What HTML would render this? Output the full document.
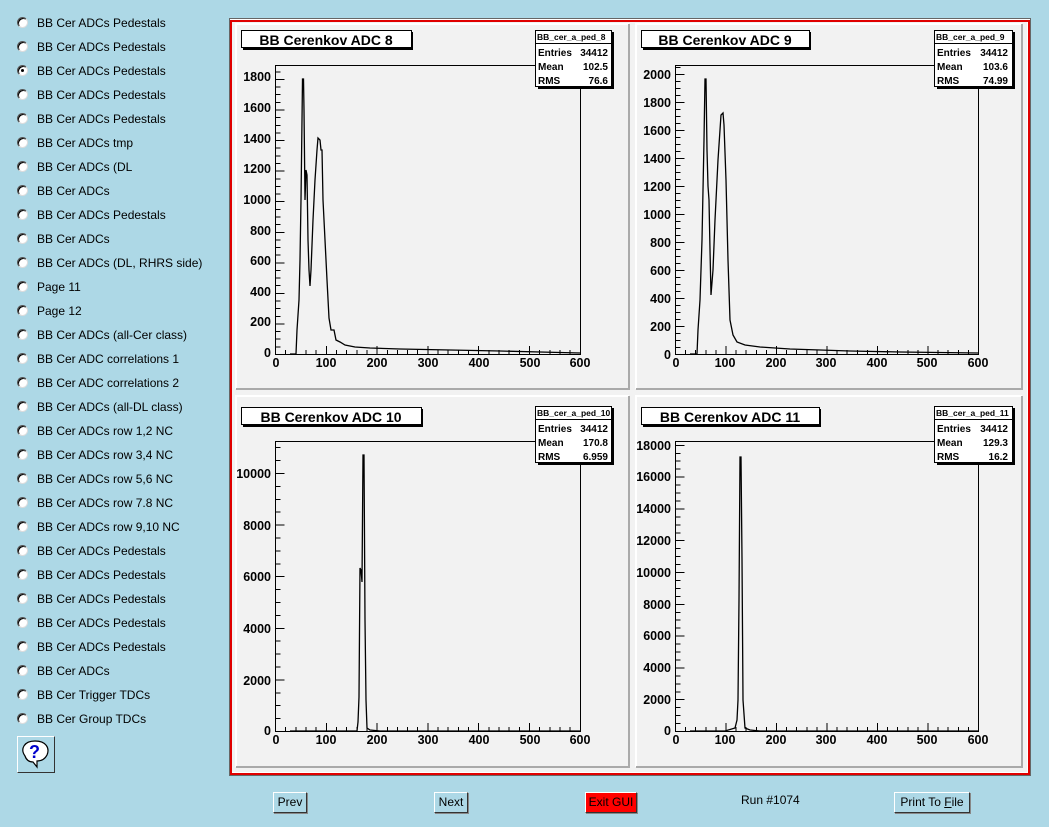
<!DOCTYPE html>
<html><head><meta charset="utf-8"><style>
body{margin:0;width:1049px;height:827px;background:#add8e6;position:relative;overflow:hidden;font-family:"Liberation Sans",sans-serif}
.it{position:absolute;left:37px;font-size:12px;color:#000;line-height:14px}
.rd{position:absolute;left:17px;width:9px;height:9px;border-radius:50%;background:#fff;border:1px solid #555;border-right-color:#ddd;border-bottom-color:#ddd;box-shadow:inset 1px 1px 0 #000}
.rd.on::after{content:"";position:absolute;left:3px;top:3px;width:3px;height:3px;background:#000;border-radius:50%}
.btn{position:absolute;height:19px;border:1px solid #fff;border-right-color:#333;border-bottom-color:#333;box-shadow:1px 1px 0 #888;font-size:12px;line-height:19px;text-align:center;background:#add8e6}
</style></head><body>
<div class="rd" style="top:17px"></div><div class="it" style="top:16px">BB Cer ADCs Pedestals</div>
<div class="rd" style="top:41px"></div><div class="it" style="top:40px">BB Cer ADCs Pedestals</div>
<div class="rd on" style="top:65px"></div><div class="it" style="top:64px">BB Cer ADCs Pedestals</div>
<div class="rd" style="top:89px"></div><div class="it" style="top:88px">BB Cer ADCs Pedestals</div>
<div class="rd" style="top:113px"></div><div class="it" style="top:112px">BB Cer ADCs Pedestals</div>
<div class="rd" style="top:137px"></div><div class="it" style="top:136px">BB Cer ADCs tmp</div>
<div class="rd" style="top:161px"></div><div class="it" style="top:160px">BB Cer ADCs (DL</div>
<div class="rd" style="top:185px"></div><div class="it" style="top:184px">BB Cer ADCs</div>
<div class="rd" style="top:209px"></div><div class="it" style="top:208px">BB Cer ADCs Pedestals</div>
<div class="rd" style="top:233px"></div><div class="it" style="top:232px">BB Cer ADCs</div>
<div class="rd" style="top:257px"></div><div class="it" style="top:256px">BB Cer ADCs (DL, RHRS side)</div>
<div class="rd" style="top:281px"></div><div class="it" style="top:280px">Page 11</div>
<div class="rd" style="top:305px"></div><div class="it" style="top:304px">Page 12</div>
<div class="rd" style="top:329px"></div><div class="it" style="top:328px">BB Cer ADCs (all-Cer class)</div>
<div class="rd" style="top:353px"></div><div class="it" style="top:352px">BB Cer ADC correlations 1</div>
<div class="rd" style="top:377px"></div><div class="it" style="top:376px">BB Cer ADC correlations 2</div>
<div class="rd" style="top:401px"></div><div class="it" style="top:400px">BB Cer ADCs (all-DL class)</div>
<div class="rd" style="top:425px"></div><div class="it" style="top:424px">BB Cer ADCs row 1,2 NC</div>
<div class="rd" style="top:449px"></div><div class="it" style="top:448px">BB Cer ADCs row 3,4 NC</div>
<div class="rd" style="top:473px"></div><div class="it" style="top:472px">BB Cer ADCs row 5,6 NC</div>
<div class="rd" style="top:497px"></div><div class="it" style="top:496px">BB Cer ADCs row 7.8 NC</div>
<div class="rd" style="top:521px"></div><div class="it" style="top:520px">BB Cer ADCs row 9,10 NC</div>
<div class="rd" style="top:545px"></div><div class="it" style="top:544px">BB Cer ADCs Pedestals</div>
<div class="rd" style="top:569px"></div><div class="it" style="top:568px">BB Cer ADCs Pedestals</div>
<div class="rd" style="top:593px"></div><div class="it" style="top:592px">BB Cer ADCs Pedestals</div>
<div class="rd" style="top:617px"></div><div class="it" style="top:616px">BB Cer ADCs Pedestals</div>
<div class="rd" style="top:641px"></div><div class="it" style="top:640px">BB Cer ADCs Pedestals</div>
<div class="rd" style="top:665px"></div><div class="it" style="top:664px">BB Cer ADCs</div>
<div class="rd" style="top:689px"></div><div class="it" style="top:688px">BB Cer Trigger TDCs</div>
<div class="rd" style="top:713px"></div><div class="it" style="top:712px">BB Cer Group TDCs</div>

<div style="position:absolute;left:17px;top:736px;width:36px;height:35px;border:1px solid #fff;border-right-color:#333;border-bottom-color:#333;background:#add8e6">
<svg width="36" height="35"><path d="M7 19 C2 12 6 4 17 4 C28 4 32 11 29 18 C26 24 20 24 19 24 L19 30 L15 25 C10 25 8 22 7 19Z" fill="#fff" stroke="#000" stroke-width="1.2"/><text x="11" y="21" font-family="Liberation Sans" font-weight="bold" font-size="18" fill="#00c">?</text></svg></div>

<svg style="position:absolute;left:0;top:0" width="1049" height="827" font-family="Liberation Sans, sans-serif">
<rect x="229.5" y="18.5" width="801" height="757" fill="#fff" stroke="#666"/>
<rect x="231" y="21" width="798" height="753" fill="none" stroke="#e00000" stroke-width="2"/>
<rect x="232" y="22" width="795" height="750" fill="#f2f2f2"/>
<g>
<path d="M236 389V24H629" stroke="#fff" fill="none" stroke-width="2"/><path d="M236 389H629V24" stroke="#aaa" fill="none" stroke-width="2"/>
<path d="M636 389V24H1022" stroke="#fff" fill="none" stroke-width="2"/><path d="M636 389H1022V24" stroke="#aaa" fill="none" stroke-width="2"/>
<path d="M236 767V396H629" stroke="#fff" fill="none" stroke-width="2"/><path d="M236 767H629V396" stroke="#aaa" fill="none" stroke-width="2"/>
<path d="M636 767V396H1022" stroke="#fff" fill="none" stroke-width="2"/><path d="M636 767H1022V396" stroke="#aaa" fill="none" stroke-width="2"/>
</g>
<g fill="none" stroke="#000" shape-rendering="crispEdges">
<rect x="275.5" y="65.5" width="305" height="289"/>
<rect x="675.5" y="65.5" width="303" height="289"/>
<rect x="275.5" y="441.5" width="305" height="290"/>
<rect x="675.5" y="441.5" width="303" height="290"/>
<line x1="275" y1="352" x2="581" y2="352" stroke-width="4" stroke-dasharray="1 9.16"/>
<line x1="275" y1="350" x2="581" y2="350" stroke-width="8" stroke-dasharray="1 49.8"/>
<line x1="675" y1="352" x2="979" y2="352" stroke-width="4" stroke-dasharray="1 9.1"/>
<line x1="675" y1="350" x2="979" y2="350" stroke-width="8" stroke-dasharray="1 49.5"/>
<line x1="275" y1="729" x2="581" y2="729" stroke-width="4" stroke-dasharray="1 9.16"/>
<line x1="275" y1="727" x2="581" y2="727" stroke-width="8" stroke-dasharray="1 49.8"/>
<line x1="675" y1="729" x2="979" y2="729" stroke-width="4" stroke-dasharray="1 9.1"/>
<line x1="675" y1="727" x2="979" y2="727" stroke-width="8" stroke-dasharray="1 49.5"/>
<line x1="278" y1="355" x2="278" y2="65" stroke-width="5" stroke-dasharray="1 6.64"/>
<line x1="280" y1="355" x2="280" y2="65" stroke-width="9" stroke-dasharray="1 29.56"/>
<line x1="678" y1="355" x2="678" y2="65" stroke-width="5" stroke-dasharray="1 6"/>
<line x1="680" y1="355" x2="680" y2="65" stroke-width="9" stroke-dasharray="1 27"/>
<line x1="278" y1="732" x2="278" y2="441" stroke-width="5" stroke-dasharray="1 11.9"/>
<line x1="280" y1="732" x2="280" y2="441" stroke-width="9" stroke-dasharray="1 50.6"/>
<line x1="678" y1="732" x2="678" y2="441" stroke-width="5" stroke-dasharray="1 6.95"/>
<line x1="680" y1="732" x2="680" y2="441" stroke-width="9" stroke-dasharray="1 30.8"/>
</g>
<g fill="none" stroke="#000">
<polyline stroke-width="1.3" points="290,354 296,354 297,330 299,300 300,260 301,200 302,120 302.5,79 303.5,79 304,110 305,200 306,170 307,175 308,240 309,270 310,286 311,270 313,220 315,180 317,150 318,138 320,140 321,150 322,150 323,200 325,240 327,280 329,318 331,330 334,330 336,340 340,342 345,345 355,347 370,348 400,349 450,350 500,351 540,352 580,353"/>
<polyline stroke-width="1.3" points="690,354 697,354 698,330 700,300 702,240 704,140 705,79 706,79 707,150 708,186 709,200 710,250 711,295 713,270 715,220 718,160 721,115 723,113 724,125 726,180 728,260 730,320 733,335 737,342 745,345 760,347 790,349 850,351 900,352 978,353"/>
<polyline stroke-width="1.3" points="290,731 357,731 358,722 359,697 360,568 361,570 362,582 363,455 364,455 365,620 366,700 367,728 370,730 380,731 580,731"/>
<polyline stroke-width="1.3" points="690,731 725,731 735,728 737,720 738,700 739,600 740,457 741,457 742,559 743,700 745,728 750,730 760,731 978,731"/>
</g>
<g font-weight="bold" font-size="12.5" text-anchor="end">
<text x="271" y="81">1800</text><text x="271" y="112">1600</text><text x="271" y="143">1400</text><text x="271" y="173">1200</text><text x="271" y="204">1000</text><text x="271" y="235">800</text><text x="271" y="265">600</text><text x="271" y="296">400</text><text x="271" y="326">200</text><text x="271" y="357">0</text>
<text x="671" y="79">2000</text><text x="671" y="107">1800</text><text x="671" y="135">1600</text><text x="671" y="163">1400</text><text x="671" y="191">1200</text><text x="671" y="219">1000</text><text x="671" y="247">800</text><text x="671" y="275">600</text><text x="671" y="303">400</text><text x="671" y="331">200</text><text x="671" y="359">0</text>
<text x="271" y="478">10000</text><text x="271" y="530">8000</text><text x="271" y="581">6000</text><text x="271" y="633">4000</text><text x="271" y="685">2000</text><text x="271" y="735">0</text>
<text x="671" y="450">18000</text><text x="671" y="481">16000</text><text x="671" y="513">14000</text><text x="671" y="545">12000</text><text x="671" y="577">10000</text><text x="671" y="609">8000</text><text x="671" y="640">6000</text><text x="671" y="672">4000</text><text x="671" y="704">2000</text><text x="671" y="735">0</text>
</g>
<g font-weight="bold" font-size="12.5" text-anchor="middle">
<text x="276" y="367">0</text><text x="326" y="367">100</text><text x="377" y="367">200</text><text x="428" y="367">300</text><text x="479" y="367">400</text><text x="530" y="367">500</text><text x="580" y="367">600</text>
<text x="676" y="367">0</text><text x="725" y="367">100</text><text x="776" y="367">200</text><text x="826" y="367">300</text><text x="877" y="367">400</text><text x="927" y="367">500</text><text x="978" y="367">600</text>
<text x="276" y="744">0</text><text x="326" y="744">100</text><text x="377" y="744">200</text><text x="428" y="744">300</text><text x="479" y="744">400</text><text x="530" y="744">500</text><text x="580" y="744">600</text>
<text x="676" y="744">0</text><text x="725" y="744">100</text><text x="776" y="744">200</text><text x="826" y="744">300</text><text x="877" y="744">400</text><text x="927" y="744">500</text><text x="978" y="744">600</text>
</g>
<g stroke="#000" fill="#fff">
<rect x="243" y="32" width="170" height="18" fill="#000" stroke="none"/><rect x="241.5" y="30.5" width="170" height="17"/>
<rect x="643" y="32" width="168" height="18" fill="#000" stroke="none"/><rect x="641.5" y="30.5" width="168" height="17"/>
<rect x="243" y="409" width="180" height="18" fill="#000" stroke="none"/><rect x="241.5" y="407.5" width="180" height="17"/>
<rect x="643" y="409" width="178" height="18" fill="#000" stroke="none"/><rect x="641.5" y="407.5" width="178" height="17"/>
</g>
<g font-weight="bold" font-size="14" text-anchor="middle">
<text x="326" y="45">BB Cerenkov ADC 8</text><text x="725" y="45">BB Cerenkov ADC 9</text>
<text x="331" y="422">BB Cerenkov ADC 10</text><text x="730" y="422">BB Cerenkov ADC 11</text>
</g>
<g stroke="#000" fill="#fff">
<rect x="538" y="32" width="76" height="57" fill="#000" stroke="none"/><rect x="535.5" y="30.5" width="76" height="56"/><line x1="536" y1="43.5" x2="611" y2="43.5"/>
<rect x="937" y="32" width="78" height="57" fill="#000" stroke="none"/><rect x="934.5" y="30.5" width="78" height="56"/><line x1="935" y1="43.5" x2="1012" y2="43.5"/>
<rect x="538" y="408" width="76" height="57" fill="#000" stroke="none"/><rect x="535.5" y="406.5" width="76" height="56"/><line x1="536" y1="419.5" x2="611" y2="419.5"/>
<rect x="937" y="408" width="78" height="57" fill="#000" stroke="none"/><rect x="934.5" y="406.5" width="78" height="56"/><line x1="935" y1="419.5" x2="1012" y2="419.5"/>
</g>
<g font-size="8.5" font-weight="bold">
<text x="537" y="40">BB_cer_a_ped_8</text><text x="936" y="40">BB_cer_a_ped_9</text>
<text x="537" y="416">BB_cer_a_ped_10</text><text x="936" y="416">BB_cer_a_ped_11</text>
</g>
<g font-size="10" font-weight="bold">
<text x="538" y="56">Entries</text><text x="538" y="70">Mean</text><text x="538" y="84">RMS</text>
<text x="937" y="56">Entries</text><text x="937" y="70">Mean</text><text x="937" y="84">RMS</text>
<text x="538" y="432">Entries</text><text x="538" y="446">Mean</text><text x="538" y="460">RMS</text>
<text x="937" y="432">Entries</text><text x="937" y="446">Mean</text><text x="937" y="460">RMS</text>
</g>
<g font-size="10" font-weight="bold" text-anchor="end">
<text x="608" y="56">34412</text><text x="608" y="70">102.5</text><text x="608" y="84">76.6</text>
<text x="1008" y="56">34412</text><text x="1008" y="70">103.6</text><text x="1008" y="84">74.99</text>
<text x="608" y="432">34412</text><text x="608" y="446">170.8</text><text x="608" y="460">6.959</text>
<text x="1008" y="432">34412</text><text x="1008" y="446">129.3</text><text x="1008" y="460">16.2</text>
</g>
</svg>

<div class="btn" style="left:273px;top:792px;width:32px">Prev</div>
<div class="btn" style="left:434px;top:792px;width:32px">Next</div>
<div class="btn" style="left:585px;top:792px;width:50px;background:#f00">Exit GUI</div>
<div style="position:absolute;left:741px;top:793px;font-size:12px">Run #1074</div>
<div class="btn" style="left:894px;top:792px;width:74px">Print To <u>F</u>ile</div>
</body></html>
